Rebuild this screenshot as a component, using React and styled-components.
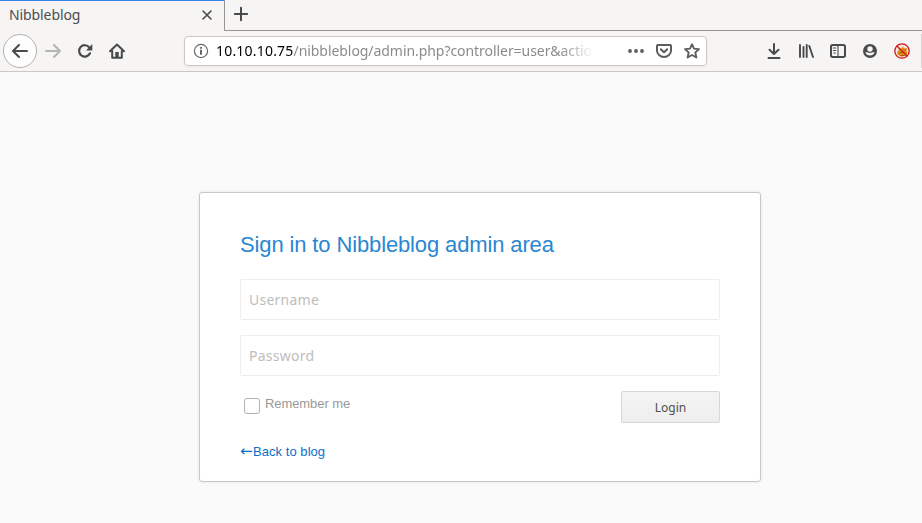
import React from "react";
import styled, { createGlobalStyle } from "styled-components";

const Global = createGlobalStyle`
  * { box-sizing: border-box; }
  body { margin: 0; background: #fafafa; }
`;

const Window = styled.div`
  width: 922px;
  height: 523px;
  overflow: hidden;
  display: flex;
  flex-direction: column;
  background: #fafafa;
  font-family: "Noto Sans", sans-serif;
`;

const TabStrip = styled.div`
  display: flex;
  height: 31px;
  background: #f6f5f4;
`;

const Tab = styled.div`
  display: flex;
  align-items: center;
  justify-content: space-between;
  width: 225px;
  padding: 0 9px 2px 9px;
  border-top: 1px solid #3584e4;
  border-right: 1px solid #979593;
`;

const TabTitle = styled.span`
  font-size: 14px;
  line-height: 20px;
  letter-spacing: -0.1px;
  color: #4a4e50;
`;

const NewTab = styled.div`
  flex: 1;
  padding: 6px 0 0 8px;
  border-bottom: 1px solid #979593;
`;

const NavBar = styled.div`
  display: flex;
  align-items: center;
  height: 41px;
  padding: 0 0 1px 3px;
  background: #f6f5f4;
  border-bottom: 1px solid #cbc7c4;
`;

const BackButton = styled.div`
  display: grid;
  place-items: center;
  width: 34px;
  height: 34px;
  border: 1px solid #b4b2b0;
  border-radius: 50%;
  background: #fdfdfd;
`;

const NavIcons = styled.div`
  display: flex;
  gap: 16px;
  margin-left: 8px;
`;

const UrlBar = styled.div`
  display: flex;
  align-items: center;
  width: 523px;
  height: 30px;
  margin-left: 59px;
  padding: 0 6px 0 8px;
  border: 1px solid #cdc7c2;
  border-radius: 4px;
  background: #fff;
  box-shadow: 0 1px 3px rgba(0, 0, 0, 0.05);
`;

const Url = styled.div`
  width: 381px;
  margin-left: 7px;
  padding-top: 1px;
  white-space: nowrap;
  font-size: 14px;
  line-height: 22px;
  letter-spacing: -0.06px;
  color: #8b8b8b;
  mask-image: linear-gradient(to left, transparent 3px, #000 36px);
`;

const Host = styled.span`
  letter-spacing: 0.2px;
  color: #000;
`;

const UrlActions = styled.div`
  display: flex;
  gap: 12px;
  margin-left: auto;
`;

const Toolbar = styled.div`
  display: flex;
  gap: 16px;
  margin-left: 59px;
`;

const Edge = styled.div`
  width: 1px;
  height: 34px;
  margin-left: 11px;
  background: #d8d5d2;
`;

const Icon = styled.svg`
  display: block;
  flex: none;
  width: 16px;
  height: 16px;
  fill: none;
  stroke: ${(p) => p.$color || "#474b4d"};
  stroke-width: ${(p) => p.$weight || 2};
  stroke-linecap: round;
  stroke-linejoin: round;
`;

const Page = styled.main`
  flex: 1;
  padding: 120px 0 0 199px;
  font-family: "Liberation Sans", sans-serif;
`;

const Card = styled.form`
  width: 562px;
  height: 290px;
  padding: 37px 40px 0;
  border: 1px solid #c8c8c8;
  border-radius: 3px;
  background: #fff;
  box-shadow: 0 0 3px rgba(0, 0, 0, 0.1);
`;

const Title = styled.h1`
  margin: 0 0 20px;
  font-size: 22px;
  line-height: 29px;
  font-weight: 400;
  letter-spacing: -0.13px;
  color: #2a86d1;
  white-space: nowrap;
`;

const Field = styled.input`
  display: block;
  width: 480px;
  height: 41px;
  margin: 0 0 15px;
  padding: 0 8px;
  border: 1px solid #eee;
  border-radius: 2px;
  outline: none;
  background: #fff;
  font-family: "Noto Sans", sans-serif;
  font-size: 14px;
  letter-spacing: 0.25px;
  &::placeholder {
    color: #bdbdbd;
    opacity: 1;
  }
`;

const Actions = styled.div`
  display: flex;
  justify-content: space-between;
  height: 32px;
`;

const Remember = styled.label`
  display: flex;
  padding-left: 4px;
  font-size: 13px;
  line-height: 25px;
  letter-spacing: -0.08px;
  color: #999;
`;

const Check = styled.input`
  appearance: none;
  width: 16px;
  height: 16px;
  margin: 7px 5px 0 0;
  border: 1px solid #b8b0a9;
  border-radius: 3px;
  background: #fff;
`;

const LoginButton = styled.button`
  width: 99px;
  height: 32px;
  padding: 0;
  border: 1px solid #d7d7d7;
  border-radius: 2px;
  background: linear-gradient(#f4f4f4, #eee);
  font-family: "Noto Sans", sans-serif;
  font-size: 12px;
  color: #505050;
`;

const BackLink = styled.a`
  display: flex;
  align-items: center;
  margin-top: 20px;
  font-size: 13px;
  line-height: 17px;
  letter-spacing: 0.05px;
  color: #0b6fc9;
`;

const Arrow = styled.span`
  width: 13px;
  font-family: "DejaVu Sans", sans-serif;
  font-size: 15px;
  white-space: nowrap;
`;

export default function App() {
  return (
    <Window>
      <Global />
      <TabStrip>
        <Tab>
          <TabTitle>Nibbleblog</TabTitle>
          <Icon viewBox="0 0 16 16" $weight={1.6}><path d="M4 4l8 8M12 4l-8 8" /></Icon>
        </Tab>
        <NewTab>
          <Icon viewBox="0 0 16 16"><path d="M8 1.8v12.4M1.8 8h12.4" /></Icon>
        </NewTab>
      </TabStrip>
      <NavBar>
        <BackButton>
          <Icon viewBox="0 0 16 16"><path d="M15 8H1.5M7 2L1 8l6 6" /></Icon>
        </BackButton>
        <NavIcons>
          <Icon viewBox="0 0 16 16" $color="#b4b4b3"><path d="M1 8h13.5M9 2l6 6-6 6" /></Icon>
          <Icon viewBox="0 0 16 16" $weight={2.2}>
            <path d="M13 10.3A5.7 5.7 0 1 1 12.3 4.4" />
            <path d="M15.3 1v6.4H9z" fill="#474b4d" stroke="none" />
          </Icon>
          <Icon viewBox="0 0 16 16">
            <path d="M1 8.3l7-6.8 7 6.8M3.2 8v6.8h9.6V8" />
            <path d="M6.3 15V9h3.4v6z" fill="#474b4d" stroke="none" />
          </Icon>
        </NavIcons>
        <UrlBar>
          <Icon viewBox="0 0 16 16" $color="#686868" $weight={1.2}>
            <circle cx="8" cy="8" r="6.6" />
            <path d="M8 7.4v3.6M8 4.8v.2" strokeWidth="2" />
          </Icon>
          <Url><Host>10.10.10.75</Host>/nibbleblog/admin.php?controller=user&amp;actio</Url>
          <UrlActions>
            <Icon viewBox="0 0 16 16" $color="none">
              <g fill="#5c5c5c"><circle cx="2" cy="8" r="1.9" /><circle cx="8" cy="8" r="1.9" /><circle cx="14" cy="8" r="1.9" /></g>
            </Icon>
            <Icon viewBox="0 0 16 16" $color="#5c5c5c">
              <path d="M2 2h12q1 0 1 1v4.5a7 6.5 0 0 1-14 0V3q0-1 1-1zM4.8 6.3L8 9.3l3.2-3" />
            </Icon>
            <Icon viewBox="0 0 16 16" $color="#5c5c5c" $weight={1.8}>
              <path d="M8 1.2l2 4.5 5 .5-3.7 3.3 1.1 5L8 12l-4.4 2.5 1.1-5L1 6.2l5-.5z" />
            </Icon>
          </UrlActions>
        </UrlBar>
        <Toolbar>
          <Icon viewBox="0 0 16 16"><path d="M8 1v10M3.5 6.8L8 11l4.5-4.2M2.5 15h11" /></Icon>
          <Icon viewBox="0 0 16 16" $weight={1.9}><path d="M2 2v12M5.5 4v10M8.7 2v12M11.3 3l3.7 11" /></Icon>
          <Icon viewBox="0 0 16 16">
            <rect x="1" y="2" width="14" height="12" rx="1.7" />
            <path d="M8 2v12M3.3 5h2.5M3.3 7.5h2.5M3.8 10h1.5" strokeWidth="1.1" />
          </Icon>
          <Icon viewBox="0 0 16 16" $color="none">
            <circle cx="8" cy="8" r="7" fill="#474b4d" />
            <circle cx="8" cy="6" r="2.7" fill="#f6f5f4" />
            <path d="M3.3 9.3h2q2.7 1.6 5.4 0h2Q11.3 12.6 8 12.6T3.3 9.3z" fill="#f6f5f4" />
          </Icon>
          <Icon viewBox="0 0 16 16" $color="#d3141b" $weight={1.3}>
            <circle cx="8" cy="8" r="7.2" fill="#f1e8df" />
            <path d="M3 11q0-3 2-4l-1-2 3 .5 2-2 1 2 3-.8-.5 3 1 2-1.5 3-5 1z" fill="#e58a12" stroke="none" />
            <path d="M6 10l2.5-1M10 7h1M7 12.5h3" stroke="#8c5b1c" strokeWidth="1" />
            <path d="M3 3l10 10" />
          </Icon>
        </Toolbar>
        <Edge />
      </NavBar>
      <Page>
        <Card>
          <Title>Sign in to Nibbleblog admin area</Title>
          <Field placeholder="Username" />
          <Field type="password" placeholder="Password" />
          <Actions>
            <Remember><Check type="checkbox" />Remember me</Remember>
            <LoginButton type="button">Login</LoginButton>
          </Actions>
          <BackLink><Arrow>←</Arrow>Back to blog</BackLink>
        </Card>
      </Page>
    </Window>
  );
}
